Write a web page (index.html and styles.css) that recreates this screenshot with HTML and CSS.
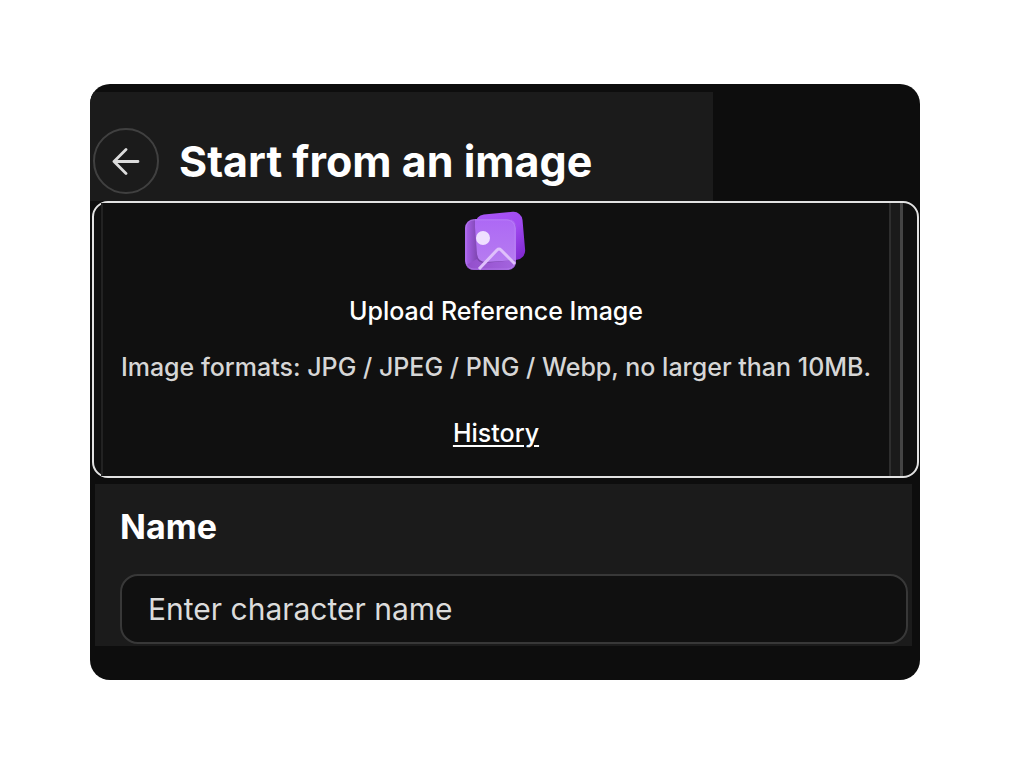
FILE: index.html
```html
<!DOCTYPE html>
<html lang="en">
<head>
    <meta charset="UTF-8">
    <meta name="viewport" content="width=device-width, initial-scale=1.0">
    <title>Start from an image</title>
    <link rel="stylesheet" href="styles.css">
</head>
<body>

    <main class="card">
        <!-- Header -->
        <header class="header">
            <button class="back-button" type="button" aria-label="Back">
                <svg width="28" height="28" viewBox="0 0 28 28" fill="none" stroke="#dcdcdc" stroke-width="2.8" stroke-linecap="round" stroke-linejoin="round">
                    <path d="M26 14.5H2M14 2.5L2 14.5L14 26.5"/>
                </svg>
            </button>
            <h1>Start from an image</h1>
        </header>

        <!-- Upload area -->
        <section class="upload">
            <div class="upload-content">
                <svg class="upload-icon" width="64" height="62" viewBox="0 0 64 62" fill="none">
                    <defs>
                        <linearGradient id="back" x1="20" y1="4" x2="60" y2="52" gradientUnits="userSpaceOnUse">
                            <stop stop-color="#a855f7"/>
                            <stop offset="0.5" stop-color="#a04af0"/>
                            <stop offset="1" stop-color="#7a22c9"/>
                        </linearGradient>
                        <linearGradient id="front" x1="2" y1="30" x2="14" y2="30" gradientUnits="userSpaceOnUse">
                            <stop stop-color="#a860ea"/>
                            <stop offset="1" stop-color="#7c45ad"/>
                        </linearGradient>
                        <linearGradient id="overlap" x1="30" y1="8" x2="30" y2="51" gradientUnits="userSpaceOnUse">
                            <stop stop-color="#ad68f5"/>
                            <stop offset="1" stop-color="#b67cf0"/>
                        </linearGradient>
                        <linearGradient id="bottom" x1="6" y1="50" x2="53" y2="60" gradientUnits="userSpaceOnUse">
                            <stop stop-color="#9450cc"/>
                            <stop offset="1" stop-color="#a566e0"/>
                        </linearGradient>
                    </defs>
                    <rect x="13" y="2" width="47" height="48" rx="9" fill="url(#back)" transform="rotate(-5 37 27)"/>
                    <rect x="1" y="8" width="51" height="51" rx="9" fill="url(#front)"/>
                    <path d="M13 48Q15 52 21 52L52 49V50Q52 59 43 59H10Q4 59 2 54Z" fill="url(#bottom)"/>
                    <path d="M11 8H43Q52 8 52 17V49L22 51Q14 51 13 43L11 16Z" fill="url(#overlap)"/>
                    <rect x="2" y="9" width="49" height="49" rx="8" stroke="#c493fa" opacity="0.4"/>
                    <circle cx="19" cy="27" r="7" fill="#efe0ff"/>
                    <path d="M15 58L33 39Q35 37 37 39L51 53" stroke="#dfc0fb" stroke-width="3"/>
                </svg>
                <h2>Upload Reference Image</h2>
                <p>Image formats: JPG / JPEG / PNG / Webp, no larger than 10MB.</p>
                <a class="history" href="#">History</a>
            </div>
        </section>

        <!-- Name form -->
        <form class="name-form">
            <label for="name">Name</label>
            <input type="text" id="name" placeholder="Enter character name">
        </form>
    </main>

</body>
</html>
```

FILE: styles.css
```css
body {
    margin: 0;
    padding: 84px 92px 84px 90px;
    background-color: white;
    color: white;
    font-family: Inter, "Liberation Sans", sans-serif;
}
.card {
    padding: 8px 0 34px;
    background-color: #0d0d0d;
    border-radius: 20px;
    overflow: hidden;
}
.header {
    display: flex;
    align-items: center;
    gap: 20px;
    box-sizing: border-box;
    width: 75%;
    padding: 36px 0 7px 3px;
    background-color: #1b1b1b;
}
.header h1 {
    margin: 0;
    font-size: 43px;
    line-height: 52px;
    font-weight: 700;
    white-space: nowrap;
}
.back-button {
    display: flex;
    align-items: center;
    justify-content: center;
    flex-shrink: 0;
    width: 66px;
    height: 66px;
    padding: 0;
    background: none;
    border: 2px solid #404040;
    border-radius: 50%;
    cursor: pointer;
}
.upload {
    margin: 0 1px 6px 2px;
    padding: 0 26px 0 7px;
    background-color: #0f0f0f;
    border: 2px solid #e2e2e2;
    border-radius: 16px;
}
.upload-content {
    display: flex;
    flex-direction: column;
    align-items: center;
    padding: 8px 0 25px;
    background-color: #101010;
    border-left: 2px solid #222;
    border-right: 2px solid #2e2e2e;
    box-shadow: 9px 0 #1a1a1a, 12px 0 #444;
}
.upload-icon {
    margin-bottom: 20px;
}
.upload h2 {
    margin: 0 0 20px;
    font-size: 25px;
    line-height: 36px;
    font-weight: 500;
}
.upload p {
    margin: 0 0 30px;
    color: #d6d6d6;
    font-size: 25px;
    line-height: 36px;
    font-weight: 500;
    white-space: nowrap;
}
.history {
    color: white;
    font-size: 25px;
    line-height: 36px;
    font-weight: 500;
    text-underline-offset: 3px;
}
.name-form {
    display: flex;
    flex-direction: column;
    gap: 26px;
    margin: 0 8px 0 5px;
    padding: 22px 4px 2px 25px;
    background-color: #1b1b1b;
}
.name-form label {
    font-size: 34px;
    line-height: 42px;
    font-weight: 700;
}
.name-form input {
    box-sizing: border-box;
    width: 100%;
    height: 70px;
    padding: 0 26px;
    background-color: #101010;
    border: 2px solid #383838;
    border-radius: 18px;
    color: white;
    font-family: inherit;
    font-size: 30px;
}
.name-form input::placeholder {
    color: #dcdcdc;
}
```
